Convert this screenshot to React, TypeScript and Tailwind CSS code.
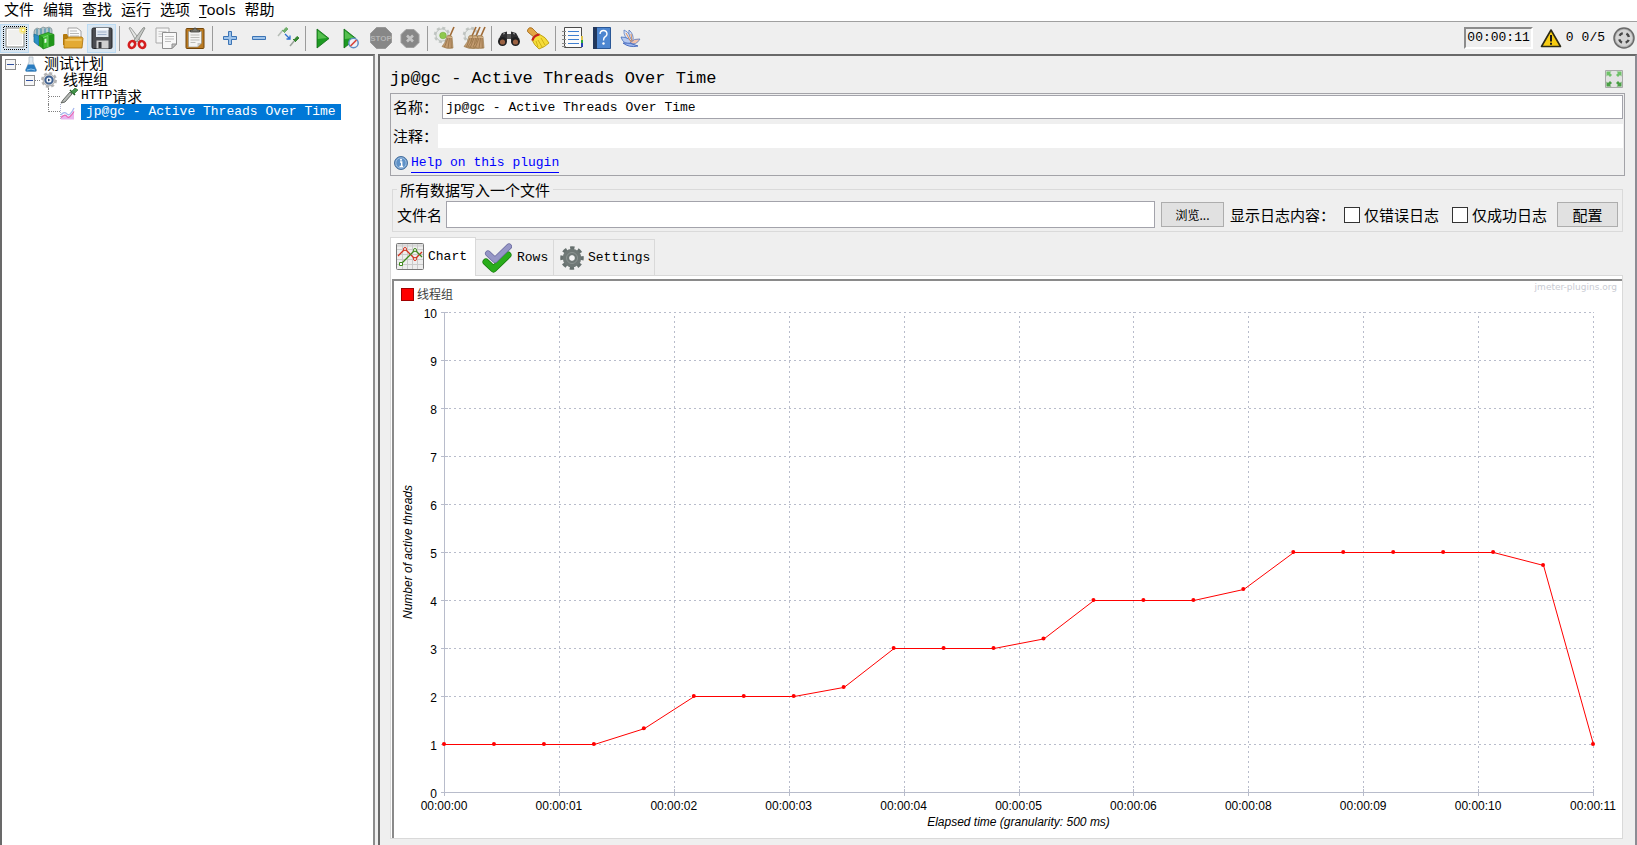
import { useLayoutEffect, useRef, useState, type ReactNode } from "react";
import clsx from "clsx";

const MONO = "font-['Liberation_Mono','Noto_Sans_CJK_SC',monospace] text-[13px]";

/* ---------- icons ---------- */

function Icon({ children, className = "w-6 h-6", box = "0 0 24 24" }: { children: ReactNode; className?: string; box?: string }) {
  return (
    <svg viewBox={box} className={clsx("shrink-0", className)} fill="none" aria-hidden="true">
      {children}
    </svg>
  );
}

const NewIcon = () => (
  <Icon>
    <path d="M3 2h18v19H3z" fill="#f0f0ee" stroke="#8b8b86" />
    <path d="M4.500 3.500h15v16h-15z" stroke="#fff" />
    <circle cx="20" cy="4" r="4" fill="#fbe870" opacity=".6" />
    <circle cx="20" cy="4" r="2.200" fill="#f8e04c" />
    <circle cx="20" cy="4" r="1.300" fill="#fffbd6" />
    <path d="M1 .5h22M1 23.500h22M.5 1v22M23.500 1v22" stroke="#000" strokeDasharray="1 1" />
  </Icon>
);

const TemplatesIcon = () => (
  <Icon>
    <path d="M2 6q0-3 3-4l3 1 3-2 3 1 3-1q3 1 3 3v5l-9 3-9-1z" fill="#b4c3c7" stroke="#71868c" strokeWidth=".7" />
    <path d="M5 3v6M9 2.500v6M13 2.500v5M17 2v6" stroke="#4b93ad" strokeWidth="1.300" />
    <path d="M2 8l5 2v10l-5-4z" fill="#2a8fc4" stroke="#17688f" strokeWidth=".7" />
    <path d="M7 9.500l4 2V23l-4-3z" fill="#2a9a22" />
    <path d="M7 9.500l9-3 6 2v10.500L11 23V11.500z" fill="#3cbb31" stroke="#15780f" strokeWidth=".7" />
    <path d="M16 9.500l6-1V19l-6 2z" fill="#20951a" />
    <path d="M12.500 13l2-.6v4l-2 .6z" fill="#e9f7e7" />
    <path d="M11 11.500l5-2V21" stroke="#8be283" strokeWidth=".8" />
  </Icon>
);

const OpenIcon = () => (
  <Icon>
    <path d="M7 2h9l4 3v10H7z" fill="#fafafa" stroke="#8e8e8e" strokeWidth=".8" />
    <path d="M9 5h7M9 7.500h9M9 10h9" stroke="#b9b9b9" />
    <path d="M2 9q0-1 1-1h3l1 2v9H2z" fill="#b67b0d" />
    <path d="M3 12.500h3l1-1.500h14l1 1.500-1 9.500H3z" fill="#e3aa34" stroke="#a86f08" strokeWidth=".8" />
    <path d="M4.500 14h16" stroke="#f9dc8e" />
  </Icon>
);

const SaveIcon = () => (
  <Icon>
    <rect x="2" y="2" width="20" height="20.500" rx="1.500" fill="#4b4d52" stroke="#232427" />
    <path d="M6 2h12.500v9H6z" fill="#dfe6ef" />
    <path d="M6 2h12.500v2H6z" fill="#f8fafc" />
    <path d="M7.500 6h9M7.500 8.500h9" stroke="#9fb0c8" />
    <path d="M6.500 14.500h12v8h-12z" fill="#d0d0d0" />
    <path d="M8.500 16h3v6h-3z" fill="#34363a" />
  </Icon>
);

const CutIcon = () => (
  <Icon>
    <path d="M4 2q1-1 2 0l9 12-2 2q-2-1-3-3z" fill="#e4e6e4" stroke="#8a8d8a" strokeWidth=".8" />
    <path d="M20 2q-1-1-2 0L9 14l2 2q2-1 3-3z" fill="#c6c9c6" stroke="#7a7d7a" strokeWidth=".8" />
    <ellipse cx="7" cy="18.500" rx="3" ry="3.500" stroke="#d41e1e" strokeWidth="2.600" transform="rotate(35 7 18.500)" />
    <ellipse cx="17" cy="18.500" rx="3" ry="3.500" stroke="#d41e1e" strokeWidth="2.600" transform="rotate(-35 17 18.500)" />
  </Icon>
);

const CopyIcon = () => (
  <Icon>
    <path d="M2 2h13v15H2z" fill="#f5f5f5" stroke="#a9a9a9" />
    <path d="M4.500 5.500h8M4.500 8h8M4.500 10.500h8" stroke="#c9c9c9" />
    <path d="M8.500 6.500h14V18L18 22.500H8.500z" fill="#f8f8f8" stroke="#8f8f8f" />
    <path d="M11 10.500h9M11 13h9M11 15.500h6" stroke="#bfbfbf" />
    <path d="M22.500 18H18v4.500z" fill="#c4c4c4" stroke="#8f8f8f" />
  </Icon>
);

const PasteIcon = () => (
  <Icon>
    <rect x="3" y="2.500" width="18" height="20" rx="1" fill="#b97a22" stroke="#74470a" />
    <path d="M5.500 5.500h13V17l-4 4h-9z" fill="#f4f4f2" stroke="#8b8b84" strokeWidth=".6" />
    <path d="M7.500 9h9M7.500 11.500h9M7.500 14h9M7.500 16.500h5" stroke="#bcbcb8" />
    <path d="M18.500 17h-4v4z" fill="#c6c6c2" />
    <path d="M7.500 6V4h2.500q0-2 2-2t2 2h2.500v2z" fill="#77776f" stroke="#3f3f3a" strokeWidth=".8" />
  </Icon>
);

const PlusIcon = () => (
  <Icon>
    <path d="M10.500 5.500h3v5h5v3h-5v5h-3v-5h-5v-3h5z" fill="#9ec3ea" stroke="#3c74b5" />
  </Icon>
);

const MinusIcon = () => (
  <Icon>
    <path d="M5.500 10.500h13v3h-13z" fill="#9ec3ea" stroke="#3c74b5" />
  </Icon>
);

const ToggleIcon = () => (
  <Icon>
    <path d="M2 10l5-6" stroke="#b5bcb5" strokeWidth="1.500" />
    <path d="M6 4l3 3M7 5l3-3.500 2 1.500-3 3z" fill="#6fae6a" stroke="#6fae6a" />
    <path d="M9 8l4.500 4.500M14 9.500v3.500h-3.500" stroke="#2f6fd0" strokeWidth="1.300" />
    <path d="M14 20l5-6" stroke="#9aa39a" strokeWidth="1.500" />
    <path d="M17 13l3 3M18 14l3-3.500 2 1.500-3 3z" fill="#35852f" stroke="#35852f" />
  </Icon>
);

const StartIcon = () => (
  <Icon>
    <path d="M6 3l12 9.500L6 22z" fill="#1d9a22" stroke="#0f6b14" strokeWidth=".8" />
    <path d="M6.800 4.800L16 12l-9.200 1z" fill="#56c04f" />
  </Icon>
);

const StartNoPauseIcon = () => (
  <Icon>
    <path d="M4 3l12 9.500L4 22z" fill="#1d9a22" stroke="#0f6b14" strokeWidth=".8" />
    <path d="M4.800 4.800L14 12l-9.200 1z" fill="#56c04f" />
    <circle cx="13.500" cy="17" r="4.700" fill="#eef2f8" stroke="#5f8ec4" strokeWidth="1.500" />
    <path d="M10.500 20l6-6" stroke="#d8463c" strokeWidth="1.700" />
  </Icon>
);

const StopIcon = () => (
  <Icon>
    <path d="M7.500 1.500h9l6 6v9l-6 6h-9l-6-6v-9z" fill="#878787" stroke="#999" />
    <text x="12" y="15" textAnchor="middle" fontSize="8" fontWeight="700" fill="#b4b4b4" fontFamily="Liberation Sans">
      STOP
    </text>
  </Icon>
);

const ShutdownIcon = () => (
  <Icon>
    <path d="M8 3.500h8l5 5v8l-5 5H8l-5-5v-8z" fill="#878787" stroke="#a0a0a0" />
    <path d="M9 9.500l6 6M15 9.500l-6 6" stroke="#c4c4c4" strokeWidth="2.600" />
  </Icon>
);

const Brush = ({ x }: { x: number }) => (
  <g transform={`translate(${x} 0)`}>
    <path d="M12 1L8 10" stroke="#a06a35" strokeWidth="1.600" />
    <path d="M5 10q3-1.500 5 .5l1 11.500q-6 1.500-11-1.500 4-4 5-10.500z" fill="#c39c70" stroke="#91703f" strokeWidth=".6" />
    <path d="M6 12l-3.500 9M7.500 12L6 22M9 12l.3 10" stroke="#8f6a42" strokeWidth=".7" />
    <path d="M5 11l5 .5" stroke="#d9b88d" />
  </g>
);

const PaleGear = () => (
  <>
    <circle cx="9" cy="9" r="7" fill="#dfe2e0" stroke="#c1c6c3" strokeWidth="2.500" strokeDasharray="3 2.500" />
    <circle cx="9" cy="9" r="6" fill="#e8ebe9" stroke="#b3b8b5" strokeWidth=".7" />
  </>
);

const SweepIcon = () => (
  <Icon>
    <PaleGear />
    <circle cx="10" cy="9.500" r="3.300" fill="#8fc94d" stroke="#74ab3b" strokeWidth=".6" />
    <Brush x={9} />
  </Icon>
);

const SweepAllIcon = () => (
  <Icon>
    <PaleGear />
    <Brush x={2} />
    <Brush x={6} />
    <Brush x={11} />
  </Icon>
);

const SearchIcon = () => (
  <Icon>
    <path d="M5 7l5-1.500v9l-8 2q-.5-5 3-9.500zM19 7l-5-1.500v9l8 2q.5-5-3-9.500z" fill="#2f2f31" />
    <path d="M10 8h4v5h-4z" fill="#555" />
    <circle cx="5.500" cy="15.500" r="4.500" fill="#1f1f20" />
    <circle cx="18.500" cy="15.500" r="4.500" fill="#1f1f20" />
    <circle cx="5.500" cy="16" r="2.600" fill="#9c6242" />
    <circle cx="18.500" cy="16" r="2.600" fill="#9c6242" />
    <path d="M6 8l2-.5M16 7.500l2 .5" stroke="#9a9a9a" />
  </Icon>
);

const SearchResetIcon = () => (
  <Icon>
    <path d="M1.500 4q1.500-3.500 4.500-2l6 6-3 4-6-5q-2-1-1.500-3z" fill="#e2a545" stroke="#9c6312" strokeWidth=".8" />
    <path d="M6 14q1-5 7-6 7 3 10 9-4 4-10 6-5-4-7-9z" fill="#f5dc3a" stroke="#b39305" strokeWidth=".8" />
    <path d="M6.500 14.500q1-5 7-6" stroke="#c8221c" strokeWidth="2.200" />
    <path d="M12 14l4 7M15 12l4 7M10 15l2 6" stroke="#c7a60c" strokeWidth=".8" />
  </Icon>
);

const FunctionHelperIcon = () => (
  <Icon>
    <path d="M3.500 1.500h17v20h-17z" fill="#fbfbfb" stroke="#4b4b4b" />
    <path d="M1 5.500h4M1 9.500h4M1 13.500h4M1 17.500h4M1 20.500h4" stroke="#8b8b8b" />
    <path d="M7 5.500h11M7 9.500h11M7 13.500h11M7 17.500h11" stroke="#3f7fd0" />
    <path d="M20 10h2v4h-2z" fill="#e0c54d" />
    <path d="M20 14h2v3h-2z" fill="#2eaa38" />
    <path d="M20 17h2v4h-2z" fill="#2743b3" />
  </Icon>
);

const HelpIcon = () => (
  <Icon>
    <path d="M3.500 1.500h17v21h-17z" fill="#4d86d0" stroke="#2a5796" />
    <path d="M3 1h4v22H3z" fill="#22375c" />
    <path d="M10 8q.3-3.500 3.500-3.500T17 8q0 1.700-2 2.900-1.500 1-1.500 3.500" stroke="#fff" strokeWidth="1.400" />
    <circle cx="13.500" cy="17.500" r="1.200" fill="#fff" />
  </Icon>
);

const FeatherIcon = () => (
  <Icon>
    <path d="M5 4q7 3 8 12Q4 12 5 4z" fill="#dbe3f5" stroke="#5c7fc4" strokeWidth=".8" />
    <path d="M10 4q5 4 4 11-5-4-4-11z" fill="#d6e0f6" stroke="#5b79b8" strokeWidth=".8" />
    <path d="M2 11q9 0 12 7-10 1-12-7z" fill="#b6c9f0" stroke="#416cba" strokeWidth=".8" />
    <path d="M21 13q-6-1-10 4 6 3 10-4z" fill="#f3c0a8" stroke="#5c7fc4" strokeWidth=".8" />
    <path d="M4 17q7-1 15 3-9 2-15-3z" fill="#9db6ec" stroke="#3459b5" strokeWidth=".8" />
    <path d="M7 7l5 9M12 8l1 7" stroke="#e08a4c" strokeWidth=".9" />
  </Icon>
);

const WarningIcon = () => (
  <Icon className="w-6 h-[22px]" box="0 0 24 22">
    <path d="M12 3l9.500 16.500h-19z" fill="#f7cc12" stroke="#2c2a16" strokeWidth="1.600" strokeLinejoin="round" />
    <path d="M12 8v6.500M12 15.800v2" stroke="#1a1a1a" strokeWidth="2" />
  </Icon>
);

const RemoteIcon = () => (
  <Icon className="w-[22px] h-[22px]" box="0 0 22 22">
    <circle cx="11" cy="11" r="10" fill="#b4b4b4" stroke="#6a6a6a" strokeWidth="1.500" />
    <circle cx="11" cy="11" r="8.300" fill="#e3e3e3" opacity=".7" />
    <circle cx="11" cy="11" r="5" stroke="#484848" strokeWidth="2.400" strokeDasharray="4 3.854" strokeDashoffset="-1.927" />
  </Icon>
);

const ExpandIcon = () => (
  <Icon className="w-[18px] h-[18px]" box="0 0 18 18">
    <path d="M.5.500h17v17H.5z" fill="#e3e3e3" stroke="#a9a9a9" />
    <path d="M1.500 1.500h5l-1.500 1.500 2 2-2 2-2-2-1.500 1.500zM16.500 1.500h-5l1.500 1.500-2 2 2 2 2-2 1.500 1.500z" fill="#6fc168" />
    <path d="M1.500 16.500h5l-1.500-1.500 2-2-2-2-2 2-1.500-1.500zM16.500 16.500h-5l1.500-1.500-2-2 2-2 2 2 1.500-1.500z" fill="#4a9f45" />
  </Icon>
);

const InfoIcon = () => (
  <Icon className="w-[14px] h-[14px]" box="0 0 14 14">
    <circle cx="7" cy="7" r="6.500" fill="#5f92c8" stroke="#476f9c" />
    <circle cx="7" cy="7" r="5.200" stroke="#b8cfe6" strokeWidth=".7" />
    <path d="M6 6h1.700v4.500M5.500 10.500h3.600" stroke="#fff" strokeWidth="1.400" />
    <circle cx="7" cy="3.700" r="1" fill="#fff" />
  </Icon>
);

const ChartTabIcon = () => (
  <Icon className="w-7 h-7" box="0 0 28 28">
    <rect x=".5" y=".5" width="27" height="26" rx="1" fill="#ededed" stroke="#777" />
    <path d="M1 2h26M1 3h26" stroke="#d0d0d0" />
    <path d="M6.500 1v25M11.500 1v25M16.500 1v25M21.500 1v25M1 6.500h26M1 11.500h26M1 16.500h26M1 21.500h26" stroke="#cacaca" />
    <path d="M2 13l7-7 10 10 7-7" stroke="#d2321e" strokeWidth="1.300" />
    <path d="M5 21L19 7l7 7" stroke="#3f8a1c" strokeWidth="1.300" />
    <circle cx="9" cy="6" r="1.500" fill="#fff" stroke="#d2321e" />
    <circle cx="19" cy="16" r="1.500" fill="#fff" stroke="#d2321e" />
    <circle cx="19" cy="7" r="1.500" fill="#fff" stroke="#3f8a1c" />
    <path d="M3.500 19.500h3v3h-3z" fill="#fff" stroke="#3f8a1c" />
  </Icon>
);

const RowsTabIcon = () => (
  <Icon className="w-[30px] h-[30px]" box="0 0 30 30">
    <path d="M4 19l7.500 7L26 12" stroke="#16780d" strokeWidth="7" strokeLinejoin="round" strokeLinecap="round" />
    <path d="M4 19l7.500 7L26 12" stroke="#2aad1b" strokeWidth="5.600" strokeLinejoin="round" strokeLinecap="round" />
    <path d="M6 10.500l7 6.500L27 3.500" stroke="#6a6a9f" strokeWidth="6" strokeLinejoin="round" strokeLinecap="round" />
    <path d="M6 10.500l7 6.500L27 3.500" stroke="#9696c6" strokeWidth="4.600" strokeLinejoin="round" strokeLinecap="round" />
  </Icon>
);

const GearTabIcon = () => (
  <Icon>
    <circle cx="12" cy="12" r="10" stroke="#66706e" strokeWidth="3.500" strokeDasharray="4.300 3.554" strokeDashoffset="2.150" />
    <circle cx="12" cy="12" r="6" stroke="#6f7876" strokeWidth="6.500" />
    <circle cx="12" cy="12" r="5.500" stroke="#8b9391" />
    <circle cx="12" cy="12" r="2.400" fill="#f4f4f4" />
  </Icon>
);

const FlaskIcon = () => (
  <Icon className="w-3 h-4" box="0 0 12 16">
    <path d="M4 1h4v5l3.500 8q0 1.500-1 1.500h-9q-1 0-1-1.500L4 6z" fill="#dfe8ef" stroke="#a9b6c0" strokeWidth=".7" />
    <path d="M3 8.500h6l2.500 5.500q0 1.500-1 1.500h-9q-1 0-1-1.500z" fill="#2a7cc0" />
    <path d="M2 14q4-2 8 0" stroke="#8cc4ee" />
  </Icon>
);

const GearTreeIcon = () => (
  <Icon className="w-[18px] h-4" box="0 0 18 16">
    <circle cx="9" cy="8" r="6.800" stroke="#b5b5b5" strokeWidth="2.400" strokeDasharray="3 2.340" />
    <circle cx="9" cy="8" r="6" fill="#d5d5d5" stroke="#9c9c9c" strokeWidth=".7" />
    <circle cx="9" cy="8" r="3.600" fill="#f6f9fc" stroke="#3f6191" strokeWidth="2" />
    <path d="M8 6.500v3l2.500-1.500z" fill="#27456e" />
  </Icon>
);

const PipetteIcon = () => (
  <Icon className="w-[18px] h-4" box="0 0 18 16">
    <path d="M1 15l2-3 7-8 2 2-7 8z" fill="#b5b9b5" stroke="#565a56" strokeWidth=".9" />
    <path d="M10 2l5 5" stroke="#1f5f22" strokeWidth="1.500" />
    <path d="M11 4l4-4 3 2-4 4z" fill="#43934a" stroke="#1f5f22" strokeWidth=".6" />
  </Icon>
);

const PlotTreeIcon = () => (
  <Icon className="w-[15px] h-4" box="0 0 15 16">
    <path d="M.5 0v16" stroke="#aeb4d0" strokeDasharray="1 1" />
    <path d="M1 13q3-4 6-1t7-5v8.500H1z" fill="#e9b4ee" />
    <path d="M1 11q3-4 6-1t7-6" stroke="#a9b8ee" strokeWidth="1.300" />
    <path d="M1 13.500q4-4 6-1t7-5" stroke="#e667b4" strokeWidth="1.200" />
  </Icon>
);

/* ---------- menu and toolbar ---------- */

const menus = ["文件", "编辑", "查找", "运行", "选项", "Tools", "帮助"];

function MenuBar() {
  return (
    <nav className="flex h-[22px] shrink-0 items-start gap-[9px] border-b border-[#a0a0a0] bg-white pl-1">
      {menus.map((name) => (
        <button key={name} type="button" className="font-['Noto_Sans','Noto_Sans_CJK_SC',sans-serif] text-[15px] leading-[18px]">
          {name === "Tools" ? (
            <>
              <span className="underline underline-offset-2">T</span>ools
            </>
          ) : (
            name
          )}
        </button>
      ))}
    </nav>
  );
}

type Tool = { name: string; icon: () => ReactNode; on?: boolean };

const toolGroups: Tool[][] = [
  [
    { name: "新建", icon: NewIcon, on: true },
    { name: "模板", icon: TemplatesIcon },
    { name: "打开", icon: OpenIcon },
    { name: "保存", icon: SaveIcon, on: true },
  ],
  [
    { name: "剪切", icon: CutIcon },
    { name: "复制", icon: CopyIcon },
    { name: "粘贴", icon: PasteIcon },
  ],
  [
    { name: "展开", icon: PlusIcon },
    { name: "收起", icon: MinusIcon },
    { name: "切换", icon: ToggleIcon },
  ],
  [
    { name: "启动", icon: StartIcon },
    { name: "不停顿开始", icon: StartNoPauseIcon },
    { name: "停止", icon: StopIcon },
    { name: "关闭", icon: ShutdownIcon },
  ],
  [
    { name: "清除", icon: SweepIcon },
    { name: "清除全部", icon: SweepAllIcon },
  ],
  [
    { name: "查找", icon: SearchIcon },
    { name: "重置查找", icon: SearchResetIcon },
  ],
  [
    { name: "函数助手", icon: FunctionHelperIcon },
    { name: "帮助", icon: HelpIcon },
    { name: "插件", icon: FeatherIcon },
  ],
];

function ToolBar() {
  return (
    <div className="flex h-8 shrink-0 items-center bg-[#efefef] pr-[2px]">
      {toolGroups.map((group, i) => (
        <div key={i} className="flex items-center">
          {i > 0 && <span className="ml-[3px] mr-[2px] h-[25px] w-px bg-[#9b9b9b]" />}
          {group.map(({ name, icon: ToolIcon, on }) => (
            <button
              key={name}
              type="button"
              aria-label={name}
              className={clsx("flex h-[29px] w-[29px] items-center justify-center", on && "border border-[#bcdcf4] bg-[#d9e6f1]")}
            >
              <ToolIcon />
            </button>
          ))}
        </div>
      ))}
      <div className={clsx("ml-auto flex items-center", MONO)}>
        <output className="mr-[6px] border-2 border-[#fff] border-l-[#8c8c8c] border-t-[#8c8c8c] px-px leading-[18px]">00:00:11</output>
        <WarningIcon />
        <span className="ml-[3px]">0</span>
        <span className="ml-2 mr-2">0/5</span>
        <RemoteIcon />
      </div>
    </div>
  );
}

/* ---------- test plan tree ---------- */

function Toggle() {
  return (
    <button type="button" aria-label="收起" className="flex h-[11px] w-[11px] items-center justify-center border border-[#8e8e8e] bg-[#f6f6f6]">
      <span className="h-px w-[7px] bg-[#2f4f9f]" />
    </button>
  );
}

function TestTree() {
  return (
    <aside className="w-[375px] shrink-0 border-l-2 border-r-2 border-t-2 border-[#696969] border-r-[#8c8c8c] bg-white">
      <ul className="text-[15px] leading-[14px]">
        <li>
          <div className="flex h-4 items-start pl-[3px]">
            <span className="flex h-4 items-center">
              <Toggle />
              <span className="mr-1 w-[5px] border-t border-dotted border-[#808080]" />
              <FlaskIcon />
            </span>
            <span className="ml-[7px]">测试计划</span>
          </div>
          <ul className="pl-[22px]">
            <li>
              <div className="flex h-4 items-start">
                <span className="flex h-4 items-center">
                  <Toggle />
                  <span className="w-[5px] border-t border-dotted border-[#808080]" />
                  <GearTreeIcon />
                </span>
                <span className="ml-[5px]">线程组</span>
              </div>
              <ul className="pl-6">
                <li className="flex h-4 items-center border-l border-dotted border-[#808080]">
                  <span className="w-[11px] border-t border-dotted border-[#808080]" />
                  <PipetteIcon />
                  <span className="ml-[3px] flex items-center">
                    <span className={MONO}>HTTP</span>请求
                  </span>
                </li>
                <li className="flex h-4 items-center">
                  <span className="h-2 w-3 self-start border-b border-l border-dotted border-[#808080]" />
                  <PlotTreeIcon />
                  <span className={clsx("ml-[6px] h-4 bg-[#0078d7] px-[5px] leading-4 text-white", MONO)}>jp@gc - Active Threads Over Time</span>
                </li>
              </ul>
            </li>
          </ul>
        </li>
      </ul>
    </aside>
  );
}

/* ---------- chart ---------- */

const values = [1, 1, 1, 1, 1.33, 2, 2, 2, 2.19, 3, 3, 3, 3.2, 4, 4, 4, 4.23, 5, 5, 5, 5, 5, 4.73, 1];
const times = ["00", "01", "02", "03", "04", "05", "06", "08", "09", "10", "11"];
const margin = { left: 50, right: 29, top: 31, bottom: 46 };

function ThreadsChart() {
  const ref = useRef<HTMLDivElement>(null);
  const [size, setSize] = useState({ w: 0, h: 0 });

  useLayoutEffect(() => {
    const el = ref.current!;
    const measure = () => setSize({ w: el.clientWidth, h: el.clientHeight });
    measure();
    const observer = new ResizeObserver(measure);
    observer.observe(el);
    return () => observer.disconnect();
  }, []);

  const right = size.w - margin.right;
  const bottom = size.h - margin.bottom;
  const plotW = right - margin.left;
  const plotH = bottom - margin.top;
  const y = (v: number) => bottom - (v / 10) * plotH;
  const snap = (n: number) => Math.round(n) + 0.5;
  const points = values.map((v, i) => [margin.left + (i / (values.length - 1)) * plotW, y(v)]);

  return (
    <div ref={ref} className="relative min-h-0 flex-1 overflow-hidden">
      {size.w > 0 && (
        <svg width={size.w} height={size.h} className="absolute inset-0 font-['Liberation_Sans','Noto_Sans_CJK_SC',sans-serif] text-[12px]">
          <rect x="7.500" y="7.500" width="12" height="12" fill="#f00" stroke="#a00000" />
          <text x="23" y="18" fill="#404040">
            线程组
          </text>
          <text x={size.w - 5} y="9" textAnchor="end" fill="#c9cbd3" className="font-['DejaVu_Sans',sans-serif] text-[9px]">
            jmeter-plugins.org
          </text>
          {Array.from({ length: 11 }, (_, v) => (
            <g key={v}>
              <path d={`M${margin.left - 3} ${snap(y(v))}h7`} stroke="#b8bccb" />
              {v > 0 && <path d={`M${margin.left + 5} ${snap(y(v))}H${right}`} stroke="#b8bccb" strokeDasharray="2 3" />}
              <text x={margin.left - 7} y={y(v) + 6} textAnchor="end">
                {v}
              </text>
            </g>
          ))}
          {times.map((t, i) => {
            const x = margin.left + (i / 10) * plotW;
            return (
              <g key={t}>
                {i > 0 && <path d={`M${snap(x)} ${bottom - 4}V${margin.top}`} stroke="#b8bccb" strokeDasharray="2 3" />}
                <path d={`M${snap(x)} ${bottom - 3}v7`} stroke="#b8bccb" />
                <text x={x} y={bottom + 18} textAnchor="middle">{`00:00:${t}`}</text>
              </g>
            );
          })}
          <path d={`M${margin.left + 0.5} ${margin.top}V${bottom + 0.5}H${right}`} stroke="#b8bccb" fill="none" />
          <polyline points={points.map((p) => p.join(",")).join(" ")} transform="translate(.5 .5)" fill="none" stroke="#f00" />
          {points.map(([px, py]) => (
            <circle key={px} cx={px} cy={py} r="2" fill="#f00" />
          ))}
          <text x={margin.left + plotW / 2} y={bottom + 34} textAnchor="middle" className="italic">
            Elapsed time (granularity: 500 ms)
          </text>
          <text x="18" y={margin.top + plotH / 2} textAnchor="middle" transform={`rotate(-90 18 ${margin.top + plotH / 2})`} className="italic">
            Number of active threads
          </text>
        </svg>
      )}
    </div>
  );
}

/* ---------- right pane ---------- */

function NamePanel() {
  return (
    <section className="mt-1 border border-[#a3a3a8] pb-[2px] pl-[2px] pr-px pt-px text-[15px]">
      <div className="flex h-6 items-center">
        <label htmlFor="name" className="w-[49px] whitespace-nowrap">
          名称：
        </label>
        <input id="name" defaultValue="jp@gc - Active Threads Over Time" className={clsx("h-6 min-w-0 flex-1 border border-[#a3a3ab] bg-white px-[3px]", MONO)} />
      </div>
      <div className="mt-[5px] flex h-6 items-center">
        <label htmlFor="comment" className="w-[45px] whitespace-nowrap">
          注释：
        </label>
        <input id="comment" className={clsx("h-6 min-w-0 flex-1 bg-white px-[3px]", MONO)} />
      </div>
      <div className="mt-[5px] flex h-5 items-center gap-[3px] pl-px">
        <InfoIcon />
        <a href="#help" className={clsx("border-b border-[#00f] leading-[18px] text-[#00f]", MONO)}>
          Help on this plugin
        </a>
      </div>
    </section>
  );
}

function FilePanel() {
  return (
    <fieldset className="mx-[2px] mt-[6px] min-w-0 border border-[#dadada] pl-1 pr-1 text-[15px] leading-[15px]">
      <legend className="px-[3px]">所有数据写入一个文件</legend>
      <div className="flex items-center pb-[3px] pt-1">
        <label htmlFor="filename" className="shrink-0">
          文件名
        </label>
        <input id="filename" className={clsx("ml-1 h-[27px] min-w-0 flex-1 border border-[#a3a3ab] bg-white px-[3px]", MONO)} />
        <button type="button" className="ml-[6px] h-[25px] w-[63px] border border-[#adadad] bg-[#e1e1e1] text-[12px]">
          浏览...
        </button>
        <span className="ml-[6px] w-[114px] shrink-0">显示日志内容：</span>
        <label className="flex shrink-0 items-center gap-1">
          <input type="checkbox" className="h-4 w-4 appearance-none border border-[#333] bg-white" />
          仅错误日志
        </label>
        <label className="ml-[13px] flex shrink-0 items-center gap-1">
          <input type="checkbox" className="h-4 w-4 appearance-none border border-[#333] bg-white" />
          仅成功日志
        </label>
        <button type="button" className="ml-[10px] h-[25px] w-[61px] shrink-0 border border-[#adadad] bg-[#e1e1e1]">
          配置
        </button>
      </div>
    </fieldset>
  );
}

function Tabs() {
  return (
    <div role="tablist" className={clsx("mt-1 flex h-[39px] shrink-0 items-end", MONO)}>
      <button type="button" role="tab" aria-selected="true" className="z-10 -mb-px flex h-[39px] w-[86px] items-center gap-1 border border-b-0 border-[#d9d9d9] bg-white pl-[5px]">
        <ChartTabIcon />
        Chart
      </button>
      <button type="button" role="tab" aria-selected="false" className="flex h-9 w-[78px] items-center gap-[5px] border-r border-t border-[#d9d9d9] pl-[6px]">
        <RowsTabIcon />
        Rows
      </button>
      <button type="button" role="tab" aria-selected="false" className="flex h-9 w-[101px] items-center gap-1 border-r border-t border-[#d9d9d9] pl-[6px]">
        <GearTabIcon />
        Settings
      </button>
    </div>
  );
}

export default function App() {
  return (
    <div className="flex h-screen flex-col bg-[#efefef] font-['Noto_Sans_CJK_SC',sans-serif] text-black">
      <MenuBar />
      <ToolBar />
      <div className="flex min-h-0 flex-1 gap-[3px]">
        <TestTree />
        <main className="flex min-w-0 flex-1 flex-col border-l-2 border-r-2 border-t-2 border-[#696969] border-r-[#8c8c94] pb-[6px] pl-[10px] pr-[10px]">
          <div className="mt-[13px] flex h-5 shrink-0 items-center justify-between pr-[2px]">
            <h1 className="font-['Liberation_Mono',monospace] text-[17px] leading-5">jp@gc - Active Threads Over Time</h1>
            <button type="button" aria-label="全屏">
              <ExpandIcon />
            </button>
          </div>
          <NamePanel />
          <FilePanel />
          <Tabs />
          <div className="mr-[2px] flex min-h-0 flex-1 flex-col border border-[#d9d9d9] bg-white pl-px pt-[3px]">
            <div className="flex min-h-0 flex-1 flex-col border-l-2 border-t-2 border-[#8a8a8a]">
              <ThreadsChart />
            </div>
          </div>
        </main>
      </div>
    </div>
  );
}
